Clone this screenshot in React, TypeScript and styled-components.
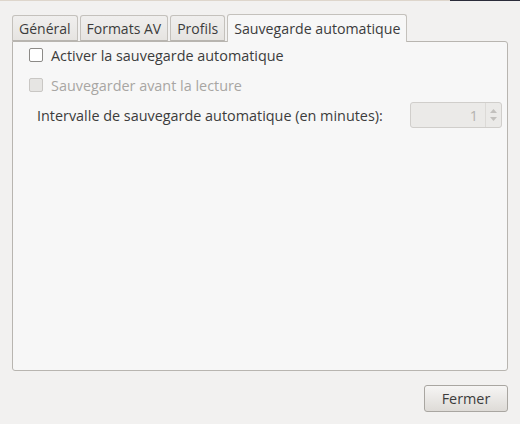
import React from "react";
import styled, { createGlobalStyle } from "styled-components";

const GlobalStyle = createGlobalStyle`
  html, body {
    margin: 0;
    padding: 0;
    background: #f2f1f0;
  }
  body {
    font-family: "Open Sans", "Noto Sans", sans-serif;
    font-size: 14px;
    color: #3c3c3c;
  }
`;

const Window = styled.div`
  width: 520px;
  height: 424px;
  display: flex;
  flex-direction: column;
  box-sizing: border-box;
  background: #f2f1f0;
`;

const TopStrip = styled.div`
  height: 1px;
  display: flex;
`;

const StripPart = styled.div<{ $dark?: boolean }>`
  flex: ${(p) => (p.$dark ? "0 0 70px" : "1")};
  background: ${(p) => (p.$dark ? "#2b2c3a" : "#ded6cc")};
`;

const Body = styled.div`
  flex: 1;
  display: flex;
  flex-direction: column;
  padding: 12px;
`;

const TabBar = styled.div`
  display: flex;
  align-items: flex-end;
  gap: 2px;
  height: 28px;
  position: relative;
  z-index: 1;
`;

const Tab = styled.div<{ $active?: boolean }>`
  box-sizing: border-box;
  height: ${(p) => (p.$active ? "28px" : "26px")};
  padding: 0 6px;
  display: flex;
  align-items: center;
  border: 1px solid #c4c1bc;
  border-bottom: ${(p) => (p.$active ? "none" : "1px solid #b8b5b0")};
  border-radius: 3px 3px 0 0;
  background: ${(p) =>
    p.$active ? "#f7f7f7" : "linear-gradient(#f0efee, #e6e4e1)"};
  color: #3c3c3c;
  white-space: nowrap;
  font-size: ${(p) => (p.$active ? "14.2px" : "14px")};
  margin-bottom: ${(p) => (p.$active ? "-1px" : "0")};
`;

const Panel = styled.div`
  flex: 1;
  border: 1px solid #b8b5b0;
  border-radius: 0 3px 3px 3px;
  background: #f7f7f7;
  padding: 3px 5px 0 16px;
  display: flex;
  flex-direction: column;
  font-size: 14.4px;
`;

const CheckRow = styled.label<{ $disabled?: boolean }>`
  display: flex;
  align-items: center;
  gap: 8px;
  height: 20px;
  margin-bottom: 10px;
  color: ${(p) => (p.$disabled ? "#a8a6a3" : "#3c3c3c")};
`;

const Box = styled.span<{ $disabled?: boolean }>`
  box-sizing: border-box;
  width: 14px;
  height: 14px;
  border: 1px solid ${(p) => (p.$disabled ? "#c9c7c4" : "#8c8a87")};
  border-radius: 2px;
  background: ${(p) => (p.$disabled ? "#e6e5e3" : "#ffffff")};
`;

const SpinRow = styled.div`
  display: flex;
  align-items: center;
  justify-content: space-between;
  padding-left: 8px;
  margin-top: -3px;
`;

const SpinBox = styled.div`
  box-sizing: border-box;
  width: 92px;
  height: 26px;
  display: flex;
  border: 1px solid #d0cecb;
  border-radius: 3px;
  background: #ebeae8;
`;

const SpinValue = styled.div`
  flex: 1;
  display: flex;
  align-items: center;
  justify-content: flex-end;
  padding-right: 7px;
  color: #b4b2af;
`;

const SpinButtons = styled.div`
  width: 15px;
  border-left: 1px solid #dcdad7;
  display: flex;
  flex-direction: column;
  align-items: center;
  justify-content: center;
  gap: 4px;
`;

const Footer = styled.div`
  display: flex;
  justify-content: flex-end;
  padding-top: 14px;
`;

const Button = styled.button`
  box-sizing: border-box;
  width: 84px;
  height: 27px;
  border: 1px solid #a9a6a1;
  border-radius: 3px;
  background: linear-gradient(#f6f5f4, #dedbd7);
  font-family: inherit;
  font-size: 14.4px;
  color: #3c3c3c;
  padding: 0;
`;

const Arrow = ({ up }: { up?: boolean }) => (
  <svg width="7" height="4" viewBox="0 0 7 4">
    <path d={up ? "M0 4 L3.5 0 L7 4 Z" : "M0 0 L3.5 4 L7 0 Z"} fill="#c2c0bd" />
  </svg>
);

export default function App() {
  return (
    <Window>
      <GlobalStyle />
      <TopStrip>
        <StripPart />
        <StripPart $dark />
      </TopStrip>
      <Body>
        <TabBar>
          <Tab>Général</Tab>
          <Tab>Formats AV</Tab>
          <Tab>Profils</Tab>
          <Tab $active>Sauvegarde automatique</Tab>
        </TabBar>
        <Panel>
          <CheckRow>
            <Box />
            Activer la sauvegarde automatique
          </CheckRow>
          <CheckRow $disabled>
            <Box $disabled />
            Sauvegarder avant la lecture
          </CheckRow>
          <SpinRow>
            <span>Intervalle de sauvegarde automatique (en minutes):</span>
            <SpinBox>
              <SpinValue>1</SpinValue>
              <SpinButtons>
                <Arrow up />
                <Arrow />
              </SpinButtons>
            </SpinBox>
          </SpinRow>
        </Panel>
        <Footer>
          <Button>Fermer</Button>
        </Footer>
      </Body>
    </Window>
  );
}
